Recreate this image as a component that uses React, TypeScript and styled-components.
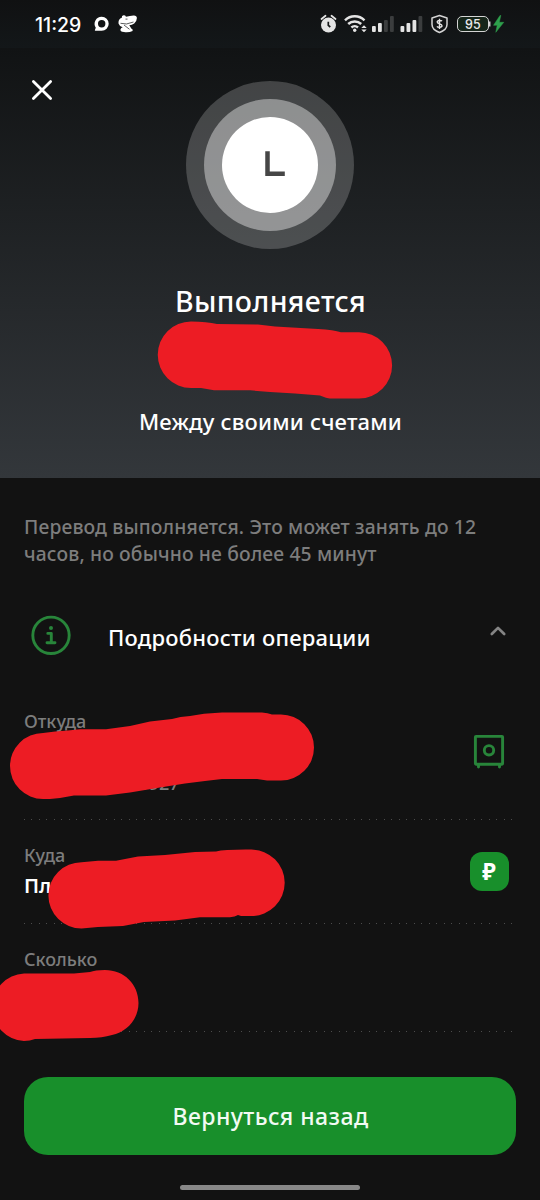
import React from 'react';
import styled, { createGlobalStyle } from 'styled-components';

const GlobalStyle = createGlobalStyle`
  *, *::before, *::after { box-sizing: border-box; }
  body { margin: 0; background: #121212; }
  svg { display: block; flex: none; overflow: visible; }
`;

const Screen = styled.main`
  display: flex;
  flex-direction: column;
  width: 540px;
  height: 1200px;
  overflow: hidden;
  background: #121212;
  color: #fff;
  font-family: 'Noto Sans', sans-serif;
`;

const StatusBar = styled.div`
  display: flex;
  align-items: center;
  justify-content: space-between;
  height: 48px;
  padding: 0 36px 0 34px;
  background: linear-gradient(#101112, #131719);
`;

const StatusGroup = styled.div`
  display: flex;
  align-items: center;
`;

const Clock = styled.span`
  width: 60px;
  padding: 1px 0 0 1px;
  font: 500 19.5px/24px Inter, sans-serif;
  letter-spacing: 0;
  white-space: nowrap;
`;

const Battery = styled.span`
  display: flex;
  align-items: center;
  justify-content: center;
  width: 32px;
  height: 16px;
  margin-left: 9px;
  border: 1.5px solid #d4d4d4;
  border-radius: 5px;
  background: #16261a;
  color: #e8e8e8;
  font: 500 12.5px/13px Inter, sans-serif;
  letter-spacing: 0.3px;
`;

const Hero = styled.header`
  display: grid;
  grid-template-columns: 1fr 168px 1fr;
  grid-template-rows: 168px auto;
  align-content: start;
  height: 430px;
  padding: 33px 32px 0;
  background: linear-gradient(#111314, #33373b);
`;

const CloseButton = styled.button`
  width: 20px;
  height: 20px;
  margin: -1px 0 0;
  padding: 0;
  border: 0;
  background: none;
`;

const Ring = styled.div<{ $size: number; $color: string }>`
  display: flex;
  align-items: center;
  justify-content: center;
  width: ${p => p.$size}px;
  height: ${p => p.$size}px;
  border-radius: 50%;
  background: ${p => p.$color};
`;

const ClockHands = styled.svg`
  margin: -3px 0 0 10px;
`;

const Summary = styled.div`
  display: flex;
  flex-direction: column;
  align-items: center;
  grid-column: 1 / -1;
  padding-top: 34px;
`;

const Title = styled.h1`
  margin: 0 0 0 1px;
  font-size: 28.5px;
  font-weight: 500;
  line-height: 36px;
  letter-spacing: 0.35px;
  white-space: nowrap;
`;

const Amount = styled.div`
  width: 234px;
  height: 87px;
  margin-left: 10px;
  padding-top: 2px;
`;

const Subtitle = styled.p`
  margin: 0 0 0 1px;
  font-size: 22px;
  font-weight: 500;
  line-height: 30px;
  letter-spacing: 0.2px;
  white-space: nowrap;
`;

const Content = styled.section`
  display: flex;
  flex-direction: column;
  padding: 35px 24px 0;
`;

const Notice = styled.p`
  margin: 0;
  color: #7d7d7d;
  font-size: 19.3px;
  font-weight: 500;
  line-height: 27px;
  letter-spacing: 0.14px;
  white-space: nowrap;
`;

const DetailsHeader = styled.div`
  display: flex;
  height: 70px;
  margin-top: 48px;
  padding-left: 7px;
`;

const DetailsTitle = styled.h2`
  flex: 1;
  margin: 7px 0 0 37px;
  font-size: 22px;
  font-weight: 500;
  line-height: 30px;
  letter-spacing: 0.22px;
  white-space: nowrap;
`;

const ChevronBox = styled.span`
  margin: 11px 10px 0 0;
`;

const Row = styled.div<{ $height: number }>`
  position: relative;
  display: flex;
  align-items: center;
  justify-content: space-between;
  height: ${p => p.$height}px;
  margin-right: 4px;
  background: repeating-linear-gradient(90deg, #4c4c4c 0 1px, transparent 1px 7px, #4c4c4c 7px 8px, transparent 8px 15px) 0 100% / 100% 1px no-repeat;
`;

const RowText = styled.div<{ $top: number }>`
  display: flex;
  flex-direction: column;
  align-self: flex-start;
  gap: 5px;
  padding-top: ${p => p.$top}px;
`;

const Label = styled.span`
  color: #7d7d7d;
  font-size: 18px;
  font-weight: 500;
  line-height: 24px;
`;

const Value = styled.span`
  min-height: 28px;
  font-size: 20px;
  font-weight: 600;
  line-height: 28px;
`;

const AccountTail = styled.span`
  padding-left: 103px;
  color: #7d7d7d;
  font-size: 18px;
  font-weight: 500;
  line-height: 24px;
`;

const RowIcon = styled.span`
  margin-right: 8px;
  padding-bottom: 2px;
`;

const RubleBadge = styled.span`
  display: flex;
  align-items: center;
  justify-content: center;
  width: 39px;
  height: 39px;
  margin: 0 3.5px 1px 0;
  border-radius: 12px;
  background: #188f2b;
  font-size: 22.5px;
  font-weight: 700;
  line-height: 39px;
`;

const Redaction = styled.svg`
  position: absolute;
  left: -24px;
  top: 0;
`;

const Footer = styled.footer`
  display: flex;
  flex-direction: column;
  align-items: center;
  margin-top: 45px;
  padding: 0 24px;
`;

const BackButton = styled.button`
  width: 100%;
  height: 78px;
  padding: 0 0 1px 1px;
  border: 0;
  border-radius: 24px;
  background: #188f2b;
  color: #f2faf3;
  font: 500 23px/76px 'Noto Sans', sans-serif;
  letter-spacing: 0.45px;
`;

const HomeIndicator = styled.div`
  width: 180px;
  height: 5px;
  margin-top: 30px;
  border-radius: 3px;
  background: #888;
`;

const RED = '#ed1c24';
const GREEN = '#28853a';

const SignalBars = ({ strong, x }: { strong: number; x: number }) => (
  <g transform={`translate(${x} 0)`}>
    {[6, 9, 12, 16].map((h, i) => (
      <rect key={h} x={i * 6} y={32 - h} width="3.8" height={h} rx="1" fill={i < strong ? '#e4e4e4' : '#3b3d3e'} />
    ))}
  </g>
);

export default function App() {
  return (
    <Screen>
      <GlobalStyle />
      <StatusBar>
        <StatusGroup>
          <Clock>11:29</Clock>
          <svg width="44" height="20" viewBox="94 14.5 44 20" fill="#fff">
            <path fillRule="evenodd" d="M101.700 17.300a7 7 0 1 1 0 14H95.300q-.7 0-.4-.8l.9-2.300a7 7 0 0 1 5.900-10.900zM101.700 20.600a3.700 3.700 0 1 0 0 7.400a3.700 3.700 0 0 0 0-7.400z" />
            <path d="M119 20.500Q120 18.500 121.800 18.200Q121.500 16 123.500 15.800Q125.300 15.600 126 17.200Q130 16.500 133.500 16Q136.800 15.800 136.900 18.500Q136.800 22 134.200 24Q132 25.600 129.300 25.800Q130.500 27.500 131.300 29Q133.300 30 132.600 31.400Q129 33.300 124 32.600Q119.800 32 120.500 29.700Q121 28.200 122.700 27.800Q119 26.300 118.500 24Q118.300 22 119 20.500z" />
            <path d="M120.500 23.800Q126 25.800 133.500 22.500M124 25.500L129.500 29.800M125.500 19.600h2" fill="none" stroke="#15191a" strokeWidth=".7" />
          </svg>
        </StatusGroup>
        <StatusGroup>
          <svg width="128" height="24" viewBox="320 12 128 24">
            <circle cx="328.500" cy="25" r="7.500" fill="#e4e4e4" />
            <path d="M321.500 19l4-3.200M335.500 19l-4-3.200" stroke="#e4e4e4" strokeWidth="1.800" strokeLinecap="round" />
            <path d="M328.300 21.800v3.500l2 1.700" fill="none" stroke="#151718" strokeWidth="1.700" />
            <g fill="none" stroke="#e4e4e4" strokeWidth="2.500">
              <path d="M345 20.300a14 14 0 0 1 19.500 0M348.200 24a9.500 9.500 0 0 1 13 0M351.400 27.500a5 5 0 0 1 6.600 0" />
            </g>
            <circle cx="354.700" cy="30.300" r="1.700" fill="#e4e4e4" />
            <path d="M361.300 28l2.700-2.800 2.700 2.800zM361.300 29.500h5.400l-2.700 2.800z" fill="#e4e4e4" />
            <SignalBars x={372} strong={2} />
            <SignalBars x={400.500} strong={3} />
            <path d="M439.500 15.500l7.500 2.500v6.500c0 4-3.500 6.500-7.500 8-4-1.500-7.500-4-7.500-8V18z" fill="none" stroke="#d4d4d4" strokeWidth="1.500" strokeLinejoin="round" />
            <path d="M442 21.200c-.7-1-4.800-1.300-4.800.9 0 2.300 4.800 1.200 4.800 3.600 0 2-4.200 2-5 .6M439.500 18.800v10.200" fill="none" stroke="#e4e4e4" strokeWidth="1.400" />
          </svg>
          <Battery>95</Battery>
          <svg width="15" height="18" viewBox="489 15 15 18">
            <path d="M489.700 21.500v5" stroke="#d4d4d4" strokeWidth="1.500" />
            <path d="M500 15.500l-6.500 9.800h3.700l-1.400 7 8-10h-4.500l1.500-6.800z" fill="#2ea04c" stroke="#2ea04c" strokeWidth=".5" />
          </svg>
        </StatusGroup>
      </StatusBar>

      <Hero>
        <CloseButton aria-label="Закрыть">
          <svg width="20" height="20" viewBox="0 0 20 20">
            <path d="M1.400 1.400l17.200 17.200M18.600 1.400L1.400 18.600" stroke="#fff" strokeWidth="2.800" strokeLinecap="round" />
          </svg>
        </CloseButton>
        <Ring $size={168} $color="rgba(255,255,255,.2)">
          <Ring $size={132} $color="rgba(255,255,255,.4)">
            <Ring $size={96} $color="#fff">
              <ClockHands width="20" height="25" viewBox="0 0 20 25">
                <path d="M2.500 .3v22.500h17.300" fill="none" stroke="#464646" strokeWidth="4.500" />
              </ClockHands>
            </Ring>
          </Ring>
        </Ring>
        <Summary>
          <Title>Выполняется</Title>
          <Amount>
            <svg width="234" height="78" viewBox="158 321 234 78">
              <path fill={RED} d="M191 321.500Q207 321.500 217 324L258 324.500L275 326.500L318 329Q334 330 341 332.300H359A33 33 0 0 1 359 398.500H330Q327 398.300 320 395.500L295 393.500L270 392L250 390.300H214L201 388H191A33 33 0 0 1 191 321.500z" />
            </svg>
          </Amount>
          <Subtitle>Между своими счетами</Subtitle>
        </Summary>
      </Hero>

      <Content>
        <Notice>
          Перевод выполняется. Это может занять до 12
          <br />
          часов, но обычно не более 45 минут
        </Notice>
        <DetailsHeader>
          <svg width="40" height="40" viewBox="0 0 40 40" fill="none" stroke={GREEN} strokeWidth="2.900">
            <circle cx="20" cy="20.300" r="18.200" />
            <path d="M16.800 18.400h3.500v8.600M16 27.700h8" strokeLinecap="round" strokeLinejoin="round" />
            <circle cx="20" cy="13" r="2" fill={GREEN} stroke="none" />
          </svg>
          <DetailsTitle>Подробности операции</DetailsTitle>
          <ChevronBox>
            <svg width="16" height="10" viewBox="0 0 16 10">
              <path d="M1.800 8L8 1.900 14.200 8" fill="none" stroke="#858585" strokeWidth="2.700" strokeLinecap="round" strokeLinejoin="round" />
            </svg>
          </ChevronBox>
        </DetailsHeader>

        <Row $height={135}>
          <RowText $top={24}>
            <Label>Откуда</Label>
            <Value />
            <AccountTail>• 0927</AccountTail>
          </RowText>
          <RowIcon>
            <svg width="30" height="33" viewBox="0 0 30 33" fill="none" stroke={GREEN} strokeWidth="2.900">
              <rect x="1.400" y="1.400" width="27.200" height="27.800" rx=".6" />
              <circle cx="15" cy="15.300" r="4.700" />
              <path d="M4.500 30v2M25.500 30v2" strokeLinecap="round" />
            </svg>
          </RowIcon>
          <Redaction width="320" height="120" viewBox="0 685 320 120">
            <path fill={RED} d="M43 733Q55 731 68 730.500L80 729.300H106L130 726L150 721.500L172 719Q180 716.500 190 716L204 713.700L222 712.600H262Q268 713 272 714.500H281A33 33 0 0 1 281 780.500H267L257 779H222L205 781L185 783.500L160 787.500L130 792.500L106 795.500H74L60 798L50 799H43A33 33 0 0 1 43 733z" />
          </Redaction>
        </Row>

        <Row $height={104}>
          <RowText $top={23}>
            <Label>Куда</Label>
            <Value>Пла</Value>
          </RowText>
          <RubleBadge>₽</RubleBadge>
          <Redaction width="320" height="115" viewBox="0 820 320 115">
            <path fill={RED} d="M81.500 862.300L98 860.800H116L138 856.500L165 855L195 852L216 851.500Q225 849.300 251.500 849.600A33 33 0 0 1 251.500 916H241L238 915Q235 917 230 917.200H200L175 920.500L144 922L123 926L98 927L81.500 928.500A33 33 0 0 1 81.500 862.300z" />
          </Redaction>
        </Row>

        <Row $height={108}>
          <RowText $top={23}>
            <Label>Сколько</Label>
            <Value />
          </RowText>
          <Redaction width="160" height="120" viewBox="0 924 160 120">
            <path fill={RED} d="M24 973.500H74L90 972Q95 970 105 970C124 970 138.500 984 138.500 1003C138.500 1019 127 1032 112 1035Q102 1038 90 1038L35 1039Q30 1041 24 1041A33.800 33.800 0 0 1 24 973.500z" />
          </Redaction>
        </Row>
      </Content>

      <Footer>
        <BackButton>Вернуться назад</BackButton>
        <HomeIndicator />
      </Footer>
    </Screen>
  );
}
